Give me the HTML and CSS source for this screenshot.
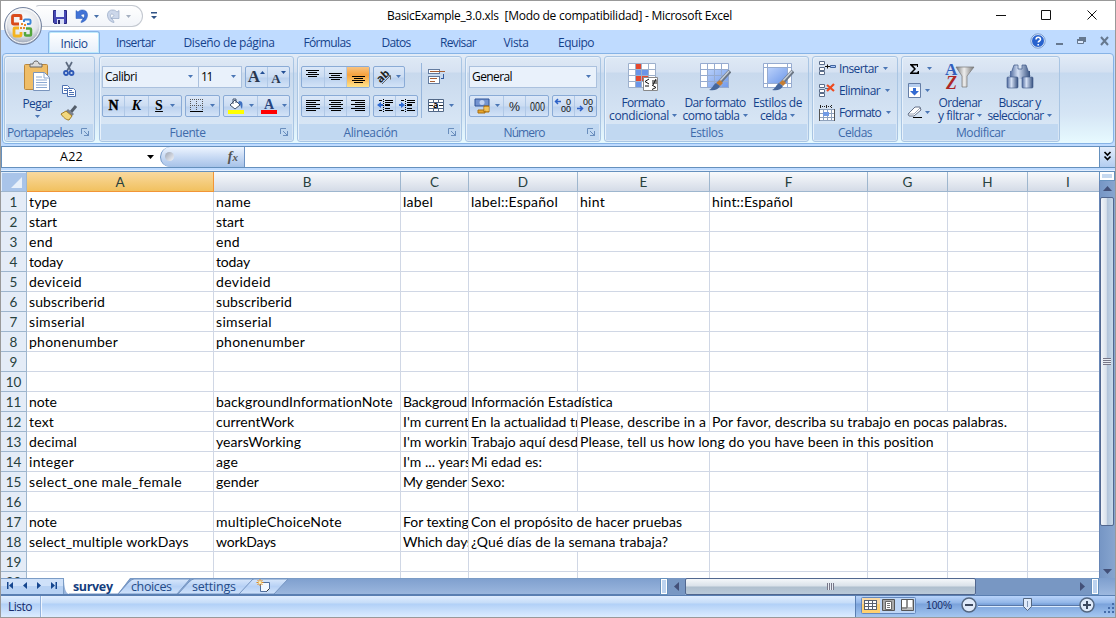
FILE: index.html
```
<!DOCTYPE html>
<html lang="es">
<head>
<meta charset="utf-8">
<title>BasicExample_3.0.xls - Microsoft Excel</title>
<link rel="stylesheet" href="styles.css">
</head>
<body>
<svg width="0" height="0" class="defs">
  <defs>
    <linearGradient id="gBox" x1="0" y1="0" x2="1" y2="1"><stop offset="0" stop-color="#b9d0fa"/><stop offset="1" stop-color="#6f99ea"/></linearGradient>
    <linearGradient id="gMetal" x1="0" y1="0" x2="1" y2="0"><stop offset="0" stop-color="#4d689c"/><stop offset=".4" stop-color="#d5e1f5"/><stop offset="1" stop-color="#35507f"/></linearGradient>
    <linearGradient id="gFunnel" x1="0" y1="0" x2="1" y2="0"><stop offset="0" stop-color="#777"/><stop offset=".45" stop-color="#eee"/><stop offset="1" stop-color="#777"/></linearGradient>
    <radialGradient id="gOrb" cx=".5" cy=".35" r=".65"><stop offset="0" stop-color="#fff"/><stop offset=".65" stop-color="#e2e4e9"/><stop offset="1" stop-color="#8d99ad"/></radialGradient>
    <linearGradient id="gTab" x1="0" y1="0" x2="0" y2="1"><stop offset="0" stop-color="#d8e7fb"/><stop offset=".5" stop-color="#b7d1f5"/><stop offset="1" stop-color="#cfe2fb"/></linearGradient>
    <symbol id="dd" viewBox="0 0 5 3"><path d="M0 0h5L2.500 3z" fill="#4a76b5"/></symbol>
    <symbol id="launch" viewBox="0 0 8 8"><path d="M.5 6V.5H6" fill="none" stroke="#6a8ebd"/><path d="M8 3v5H3V7h4V3z" fill="#6a8ebd"/><path d="M3 3l4 4" stroke="#6a8ebd"/></symbol>
    <symbol id="brush" viewBox="0 0 22 22"><path d="M21 1L10 13" stroke="#6b7685" stroke-width="4"/><path d="M20 1L10 12" stroke="#c5ced9" stroke-width="1.500"/><path d="M11 10l3 3-3 3-4-3z" fill="#c57d33"/><path d="M7 13l4 3c-2 4-6 5-11 4 3-1 4-5 7-7z" fill="#46679c"/></symbol>
  </defs>
</svg>
<div class="window">
  <header class="titlebar">
    <div class="qat">
      <svg width="100" height="21" viewBox="43 6 100 21">
        <path d="M53.500 10.500h13v13h-12l-1-1z" fill="#4548b4" stroke="#292982"/><path d="M56 10h8v7h-8z" fill="#e9f1ff"/><path d="M57 19h7v5h-7z" fill="#d8def5"/><path d="M58 20h2v4h-2z" fill="#252569"/>
        <path d="M76 10.500v8h8l-3-3c2.500-3 4.500-1 3 2-1 2-3 3-3 5 8-1 9-13 1-12.500-2 0-3 1-4 2z" fill="#4273d6" stroke="#2758b4" stroke-width=".5"/>
        <path d="M119 10.500v8h-8l3-3c-2.500-3-4.500-1-3 2 1 2 3 3 3 5-8-1-9-13-1-12.500 2 0 3 1 4 2z" fill="#ccd7ea" stroke="#98a9c6" stroke-width=".7"/>
        <path d="M94 15h5l-2.500 3z" fill="#4770aa"/><path d="M126 15h5l-2.500 3z" fill="#a4afc0"/>
      </svg>
    </div>
    <svg class="qat-more" width="6" height="8"><path d="M0 0h6v1.500H0zM0 4h6L3 7z" fill="#315386"/></svg>
    <div class="title"><span data-w="345">BasicExample_3.0.xls&nbsp; [Modo de compatibilidad] - Microsoft Excel</span></div>
    <svg class="winbtns" width="104" height="12" viewBox="995 9 104 12" fill="none" stroke="#111" stroke-width="1"><path d="M996 15.500h10M1041.500 10.500h9v9h-9zM1087.500 10.500l9 9M1096.500 10.500l-9 9"/></svg>
  </header>
  <nav class="tabs">
    <div class="tab active"><span data-w="27">Inicio</span></div>
    <div class="tab"><span data-w="39">Insertar</span></div>
    <div class="tab"><span data-w="91">Diseño de página</span></div>
    <div class="tab"><span data-w="47">Fórmulas</span></div>
    <div class="tab"><span data-w="29">Datos</span></div>
    <div class="tab"><span data-w="36">Revisar</span></div>
    <div class="tab"><span data-w="25">Vista</span></div>
    <div class="tab"><span data-w="36">Equipo</span></div>
    <svg class="docbtns" width="80" height="16" viewBox="1030 33 80 16">
      <circle cx="1038" cy="41" r="6.500" fill="#2762ce" stroke="#e7f1ff"/><circle cx="1038" cy="41" r="7.200" fill="none" stroke="#5e83b9" stroke-width=".7"/><path d="M1036 39.500c0-3 4.500-3 4.500 0 0 1.500-2.300 1.500-2.300 3M1038.200 44v1.500" stroke="#fff" stroke-width="1.500" fill="none"/>
      <path d="M1056 43h7v2h-7zM1079 37h7v5h-2v-3h-5z" fill="#66788f"/><path d="M1077.500 39.500h6v4h-6z" fill="#dceaff" stroke="#66788f"/><path d="M1077 39h7v2h-7z" fill="#66788f"/><path d="M1101 37l7 8M1108 37l-7 8" stroke="#66788f" stroke-width="2"/>
    </svg>
  </nav>
  <section class="ribbon">
    <div class="group g-clip">
      <div class="body">
        <div class="big paste">
          <svg width="27" height="31" viewBox="0 0 27 31"><rect x=".5" y="3.500" width="23" height="25" rx="1" fill="#efbd67" stroke="#bb873b"/><path d="M6 6V3h3c0-4 6-4 6 0h3v3z" fill="#dadada" stroke="#666"/><path d="M9.500 11.500h11l5 5v13h-16z" fill="#fff" stroke="#7994bc"/><path d="M20 12v5h5M12 16h6M12 19h11M12 21.500h11M12 24h11M12 26.500h11" stroke="#8ba8d2" fill="none"/></svg>
          <span data-w="29">Pegar</span><svg class="dd"><use href="#dd"/></svg>
        </div>
        <div class="stack">
          <svg width="16" height="16" viewBox="0 0 16 16" fill="none"><path d="M5 1l5 9M11 1L6 10" stroke="#5d6b80" stroke-width="1.700"/><circle cx="5" cy="12" r="2" stroke="#2e59b6" stroke-width="1.800"/><circle cx="10.500" cy="12" r="2" stroke="#2e59b6" stroke-width="1.800"/></svg>
          <svg width="16" height="16" viewBox="0 0 16 16" fill="#fff" stroke="#4d71b1"><path d="M1.500 2.500h5l2 2v6h-7z"/><path d="M3 5.500h3M3 7.500h3"/><path d="M6.500 5.500h6l2 2v6h-8z"/><path d="M8 9.500h5M8 11.500h5M8 7.500h3"/></svg>
          <svg width="16" height="16" viewBox="0 0 16 16"><path d="M15 1l-5 6" stroke="#545e6b" stroke-width="3"/><path d="M7 4l6 5-2 2-6-5z" fill="#7a808d"/><path d="M5 6l6 5-3 4c-3 0-6-3-8-6z" fill="#f2d87e" stroke="#a17b22"/></svg>
        </div>
      </div>
      <footer><span data-w="66">Portapapeles</span><svg class="launch"><use href="#launch"/></svg></footer>
    </div>
    <div class="group g-font">
      <div class="body rows">
        <div class="row">
          <div class="combo w97"><span data-w="32">Calibri</span><svg class="dd"><use href="#dd"/></svg></div><div class="combo w43 joined"><span data-w="11">11</span><svg class="dd"><use href="#dd"/></svg></div>
          <div class="btns w45 gap"><div class="b"><b class="serif">A</b><svg class="sup" width="5" height="3"><path d="M0 3h5L2.500 0z" fill="#234f95"/></svg></div><div class="b"><b class="serif small">A</b><svg class="sup" width="5" height="3"><path d="M0 0h5L2.500 3z" fill="#234f95"/></svg></div></div>
        </div>
        <div class="row">
          <div class="btns w80"><div class="b w22"><b class="serif nks heavy">N</b></div><div class="b w24"><b class="serif nks"><i>K</i></b></div><div class="b"><b class="serif nks"><u>S</u></b><svg class="dd far"><use href="#dd"/></svg></div></div>
          <div class="btns w35 gap"><div class="b"><svg width="13" height="14"><path d="M.5 0v12M6.500 0v12M12.500 0v12M0 .5h13M0 6.500h13" stroke="#555" stroke-dasharray="1 1"/><path d="M0 12.500h13" stroke="#000"/></svg><svg class="dd far"><use href="#dd"/></svg></div></div>
          <div class="btns w67 gap"><div class="b w33"><svg width="17" height="16"><path d="M2 7l5-5 5 5-5 4z" fill="#fff" stroke="#43536c"/><path d="M5 6V1h3v4" fill="none" stroke="#43536c"/><path d="M11 3c4 0 4 3 3 8-2-3-1-5-4-6z" fill="#3e70c0"/><path d="M0 12h16v4H0z" fill="#ff0"/></svg><svg class="dd"><use href="#dd"/></svg></div><div class="b"><svg width="17" height="16"><text x="3" y="11" class="sv-serif" font-size="14" font-weight="bold" fill="#29457e">A</text><path d="M0 12h16v4H0z" fill="#f00"/></svg><svg class="dd"><use href="#dd"/></svg></div></div>
        </div>
      </div>
      <footer><span data-w="36">Fuente</span><svg class="launch"><use href="#launch"/></svg></footer>
    </div>
    <div class="group g-align">
      <div class="body cols">
        <div class="rows">
          <div class="row">
            <div class="btns w69"><div class="b"><svg class="al up" width="15" height="8"><path d="M1 .5h13M3 2.500h9M1 4.500h13M3 6.500h9"/></svg></div><div class="b"><svg class="al" width="15" height="8"><path d="M1 .5h13M3 2.500h9M1 4.500h13M3 6.500h9"/></svg></div><div class="b on"><svg class="al down" width="15" height="8"><path d="M1 .5h13M3 2.500h9M1 4.500h13M3 6.500h9"/></svg></div></div>
            <div class="btns w32 gap"><div class="b"><svg width="15" height="16"><text x="0" y="12" class="sv-ui" font-size="11" font-weight="bold" fill="#222" transform="rotate(-43 5 9)">ab</text><path d="M5 15l8-8M13.500 6.500v4M13.500 6.500h-3.500" stroke="#666" fill="none"/></svg><svg class="dd"><use href="#dd"/></svg></div></div>
          </div>
          <div class="row">
            <div class="btns w69"><div class="b"><svg class="al" width="14" height="12"><path d="M0 .5h14M0 2.500h10M0 4.500h14M0 6.500h10M0 8.500h14M0 10.500h10"/></svg></div><div class="b"><svg class="al" width="14" height="12"><path d="M0 .5h14M2 2.500h10M0 4.500h14M2 6.500h10M0 8.500h14M2 10.500h10"/></svg></div><div class="b"><svg class="al" width="14" height="12"><path d="M0 .5h14M4 2.500h10M0 4.500h14M4 6.500h10M0 8.500h14M4 10.500h10"/></svg></div></div>
            <div class="btns w45 gap"><div class="b"><svg class="al" width="16" height="14"><path d="M2 1.500h3M8 1.500h8M8 3.500h8M8 9.500h5M2 11.500h3M8 11.500h8"/><path d="M8 6h5" stroke-width="2"/><path d="M6.500 0v14" stroke-dasharray="1 1"/><path d="M4 3v2h2v2H4v2L0 6z" fill="#2e69d1" stroke="none"/></svg></div><div class="b"><svg class="al" width="16" height="14"><path d="M2 1.500h3M8 1.500h8M8 3.500h8M8 9.500h5M2 11.500h3M8 11.500h8"/><path d="M8 6h5" stroke-width="2"/><path d="M6.500 0v14" stroke-dasharray="1 1"/><path d="M2 3v2H0v2h2v2l4-3z" fill="#2e69d1" stroke="none"/></svg></div></div>
          </div>
        </div>
        <div class="sep"></div>
        <div class="rows wrap-merge">
          <div class="row"><svg width="17" height="16"><rect x=".5" y=".5" width="11" height="4" fill="#fff" stroke="#637b9f"/><path d="M2 2.500h15" stroke="#a65f36"/><rect x=".5" y="7.500" width="11" height="7" fill="#fff" stroke="#637b9f"/><path d="M2 9.500h7M2 12.500h5" stroke="#a65f36"/><path d="M15.500 5v5M13 9.500h3" stroke="#315aa0"/></svg></div>
          <div class="row"><svg width="16" height="15"><path d="M.5 1.500h15v12H.5zM.5 4.500h15M.5 10.500h15M5.500 1v3M10.500 1v3M5.500 10v3M10.500 10v3" fill="#fff" stroke="#526887"/><text x="5" y="10" class="sv-ui" font-size="9" font-weight="bold">a</text><path d="M1 7.500h4M11 7.500h4" stroke="#222"/></svg><svg class="dd merge-dd"><use href="#dd"/></svg></div>
        </div>
      </div>
      <footer><span data-w="54">Alineación</span><svg class="launch"><use href="#launch"/></svg></footer>
    </div>
    <div class="group g-num">
      <div class="body rows">
        <div class="row"><div class="combo w128"><span data-w="40">General</span><svg class="dd"><use href="#dd"/></svg></div></div>
        <div class="row">
          <div class="btns w80"><div class="b w34"><svg width="17" height="17"><path d="M1 2h14v7H1z" fill="#7494d0" stroke="#2e5396"/><circle cx="8" cy="5.500" r="2.500" fill="#c1d3f4"/><path d="M10 9h5v6h-5zM4 13h7v3H4z" fill="#e8a628" stroke="#a86f12"/><path d="M10 11h5M10 13h5" stroke="#ffe28a"/></svg><svg class="dd"><use href="#dd"/></svg></div><div class="b w23"><svg width="12" height="12"><text x="0" y="10.500" class="sv-lib" font-size="13" fill="#222" textLength="11" lengthAdjust="spacingAndGlyphs">%</text></svg></div><div class="b"><svg width="15" height="12"><text x="0" y="10.500" class="sv-lib" font-size="13" fill="#222" textLength="15" lengthAdjust="spacingAndGlyphs">000</text></svg></div></div>
          <div class="btns w45 gap"><div class="b"><svg width="17" height="15"><path d="M0 3.500h6M3 1L.5 3.500 3 6" stroke="#2d61c7" stroke-width="1.500" fill="none"/><text x="11" y="7" class="sv-num">0</text><text x="6" y="14" class="sv-num">00</text></svg></div><div class="b"><svg width="17" height="15"><path d="M0 10.500h6M3 8l2.500 2.500L3 13" stroke="#2d61c7" stroke-width="1.500" fill="none"/><text x="6" y="7" class="sv-num">00</text><text x="11" y="14" class="sv-num">0</text></svg></div></div>
        </div>
      </div>
      <footer><span data-w="41">Número</span><svg class="launch"><use href="#launch"/></svg></footer>
    </div>
    <div class="group g-style">
      <div class="body">
        <div class="big s1"><svg width="30" height="31"><path d="M.5.500h27v24H.5z" fill="#fff"/><path d="M7 0h7v6H7zM7 13h13v6H7z" fill="#e5482e"/><path d="M7 6h13v7H7zM7 19h7v6H7z" fill="#6b95e8"/><path d="M.5.500h27v24H.5zM0 6.500h28M0 12.500h28M0 18.500h28M7.500 0v25M13.500 0v25M20.500 0v25" fill="none" stroke="#9db0cc"/><path d="M15.500 14.500h14v13h-14z" fill="#fff" stroke="#888"/><path d="M21 16l-4 2.500 4 2.500M17 23h4M24 18h5M24 20h5M28 16l-3 6M24 22l4 2.500-4 2" stroke="#111" fill="none"/></svg><span data-w="43">Formato</span><div class="l2"><span data-w="60">condicional</span><svg class="dd"><use href="#dd"/></svg></div></div>
        <div class="big s2"><svg width="30" height="31"><path d="M.5.500h28v24H.5z" fill="#fff"/><path d="M7 6h22v19H7z" fill="url(#gBox)"/><path d="M.5.500h28v24H.5zM0 6.500h28M0 12.500h28M0 18.500h28M7.500 0v25M14.500 0v25M21.500 0v25" fill="none" stroke="#96abd0"/><use href="#brush" x="9" y="7" width="22" height="22"/></svg><span data-w="61">Dar formato</span><div class="l2"><span data-w="57">como tabla</span><svg class="dd"><use href="#dd"/></svg></div></div>
        <div class="big s3"><svg width="30" height="31"><path d="M.5.500h28v24H.5z" fill="#fff"/><path d="M5 5h19v15H5z" fill="url(#gBox)"/><path d="M.5.500h28v24H.5zM0 4.500h28M0 20.500h28M4.500 0v25M24.500 0v25" fill="none" stroke="#96abd0"/><use href="#brush" x="9" y="7" width="22" height="22"/></svg><span data-w="49">Estilos de</span><div class="l2"><span data-w="27">celda</span><svg class="dd"><use href="#dd"/></svg></div></div>
      </div>
      <footer><span data-w="33">Estilos</span></footer>
    </div>
    <div class="group g-cells">
      <div class="body list">
        <div class="item"><svg width="17" height="15"><path d="M.5.500h5v3h-5zM.5 6.500h5v3h-5zM.5 10.500h5v3h-5z" fill="#fff" stroke="#5a6c89"/><path d="M6 5.500h5M8.500 3.500v4" stroke="#111"/><path d="M11.500 4.500h5v2h-5z" fill="#adcaff" stroke="#41649e"/></svg><span data-w="39">Insertar</span><svg class="dd"><use href="#dd"/></svg></div>
        <div class="item"><svg width="17" height="15"><path d="M.5 1.500h5v3h-5zM.5 6.500h5v3h-5zM.5 10.500h5v3h-5zM6 5.500h5" fill="#fff" stroke="#5a6c89"/><path d="M8 2l7 6M15 1L8 8" stroke="#ed4a20" stroke-width="2.200"/></svg><span data-w="41">Eliminar</span><svg class="dd"><use href="#dd"/></svg></div>
        <div class="item"><svg width="17" height="16"><path d="M1 1.500h12M1.500 0v3M7.500 0v3M12.500 0v3" stroke="#222" stroke-dasharray="1 1"/><path d="M.5 4.500h15v11H.5zM.5 8.500h15M.5 12.500h15M4.500 4v11M8.500 4v11M12.500 4v11" fill="#fff" stroke="#8fa2bc"/><path d="M4 7h6v4H4z" fill="#719be5"/><path d="M.5 4v12M15.500 4v12" stroke="#555"/></svg><span data-w="42">Formato</span><svg class="dd"><use href="#dd"/></svg></div>
      </div>
      <footer><span data-w="34">Celdas</span></footer>
    </div>
    <div class="group g-edit">
      <div class="body">
        <div class="list minor">
          <div class="item"><svg width="12" height="12"><path d="M2 1h8v3H9V2.500H5L8 6 4.500 9.500H9L10 8h1v3H2v-1l4-4-4-4z" fill="#000"/></svg><svg class="dd far"><use href="#dd"/></svg></div>
          <div class="item"><svg width="13" height="15"><path d="M.5.500h12v14H.5z" fill="#fff" stroke="#657ea6"/><path d="M1 1h11v3H1z" fill="#b6ceef"/><path d="M5 5h3v3h3l-4.500 4.500L2 8h3z" fill="#326ad1"/></svg><svg class="dd"><use href="#dd"/></svg></div>
          <div class="item"><svg width="13" height="13"><path d="M0 8l7-7h5l1 3-7 6H1z" fill="#fff" stroke="#647188"/><path d="M1 8h5l6-6" fill="none" stroke="#9ba6b8"/><path d="M5 11.500h9" stroke="#000"/></svg><svg class="dd"><use href="#dd"/></svg></div>
        </div>
        <div class="big e1"><svg width="30" height="31"><text x="0" y="12" class="sv-serif" font-size="17" font-weight="bold" fill="#315ebd">A</text><text x="1" y="26" class="sv-serif" font-size="18" font-weight="bold" font-style="italic" fill="#ad2727">Z</text><path d="M11 4h18l-7 9v11h-5V13z" fill="url(#gFunnel)" stroke="#777" stroke-width=".7"/></svg><span data-w="43">Ordenar</span><div class="l2"><span data-w="36">y filtrar</span><svg class="dd"><use href="#dd"/></svg></div></div>
        <div class="big e2"><svg width="28" height="31"><path d="M8 2h4v4h4V2h4l4 11H4z" fill="url(#gMetal)" stroke="#3e5788" stroke-width=".7"/><path d="M4 8h8v6H4zM16 8h8v6h-8zM12 9h4v7h-4z" fill="url(#gMetal)"/><rect x="1" y="14" width="11" height="11" rx="1" fill="url(#gMetal)" stroke="#3d5788" stroke-width=".6"/><rect x="16" y="14" width="11" height="11" rx="1" fill="url(#gMetal)" stroke="#3d5788" stroke-width=".6"/></svg><span data-w="42">Buscar y</span><div class="l2"><span data-w="56">seleccionar</span><svg class="dd"><use href="#dd"/></svg></div></div>
      </div>
      <footer><span data-w="49">Modificar</span></footer>
    </div>
  </section>
  <section class="formula">
    <div class="namebox"><span data-w="23">A22</span><svg width="7" height="4"><path d="M0 0h7L3.500 4z"/></svg></div>
    <div class="fx"><i class="knob"></i><span class="fxlabel">f<small>x</small></span></div>
    <div class="input"></div>
    <div class="expand"><svg width="7" height="9"><path d="M.5 0L3.500 3l3-3M.5 4.500l3 3 3-3" fill="none" stroke="#000" stroke-width="1.700"/></svg></div>
  </section>
  <main class="work">
    <div class="sheet" id="sheet"></div>
    <div class="vscroll"><div class="splitter"></div><div class="arrow"><svg width="9" height="5"><path d="M0 5h9L4.500 0z" fill="#435078"/></svg></div><div class="vthumb"><i></i></div><div class="arrow end"><svg width="9" height="5"><path d="M0 0h9L4.500 5z" fill="#435078"/></svg></div></div>
  </main>
  <section class="bottom">
    <svg class="sheettabs" width="659" height="17" viewBox="1 579 659 17">
      <path d="M1 579h62v16H1z" fill="#cfe1f9"/><path d="M1 587h62v8H1z" fill="#b7d1f3"/><path d="M1 579.500h659M63.500 579v16" stroke="#7b9cc6"/>
      <path d="M7 583h1.500v7H7zM13 583v7l-4-3.500zM27 583v7l-4-3.500zM37 583v7l4-3.500zM51 583v7l4-3.500zM55.500 583H57v7h-1.500z" fill="#15468f"/>
      <path d="M238 595l11-12q3-3 5-3h34l-14 15z" fill="url(#gTab)" stroke="#7595c2"/>
      <path d="M178 595l11-12q3-3 5-3h59l-14 15z" fill="url(#gTab)" stroke="#7595c2"/>
      <path d="M118 595l11-12q3-3 5-3h56l-13 15z" fill="url(#gTab)" stroke="#7595c2"/>
      <path d="M64 579h66l-12 16H69q-5-1-5-16z" fill="#fff"/><path d="M130 580l-12 15H69" fill="none" stroke="#7595c2"/>
      <path d="M1 595.500h659" stroke="#5a7fb2"/>
      <text x="73" y="592" class="sv-ui" font-size="12.500" font-weight="bold" fill="#153e7e" textLength="40">survey</text>
      <text x="131" y="592" class="sv-ui" font-size="12.500" fill="#244b88" textLength="41">choices</text>
      <text x="192" y="592" class="sv-ui" font-size="12.500" fill="#244b88" textLength="44">settings</text>
      <path d="M260.500 583.500h9v6l-3 3h-6z" fill="#f3f8ff" stroke="#516f9e"/><path d="M269.500 589.500l-3 3" stroke="#333"/><path d="M260 580v7M256.500 583.500h7M257.500 581l5 5M262.500 581l-5 5" stroke="#e18a1c"/><circle cx="260" cy="583.500" r="1.500" fill="#fff2b2"/>
    </svg>
    <div class="hsplit"></div>
    <div class="hbtn"><svg width="5" height="9"><path d="M5 0v9L0 4.500z" fill="#435078"/></svg></div>
    <div class="hthumb"><i></i></div>
    <div class="htrack"><svg width="5" height="9"><path d="M0 0v9l5-4.500z" fill="#435078"/></svg></div>
    <div class="hsplit two"></div>
  </section>
  <footer class="status">
    <div class="ready"><span data-w="24">Listo</span></div>
    <div class="mid"></div>
    <div class="right">
      <svg width="257" height="21" viewBox="857 597 257 21">
        <rect x="861.500" y="598.500" width="54" height="16" rx="1" fill="#bed6f6" stroke="#6488bd"/><rect x="862" y="599" width="18" height="15" fill="#ffd06e"/><path d="M862 599h18v6h-18z" fill="#f9d9a5"/>
        <path d="M864 601h13v10h-13z" fill="#59616d"/><path d="M865 602h3v2h-3zM869 602h3v2h-3zM873 602h3v2h-3zM865 605h3v2h-3zM869 605h3v2h-3zM873 605h3v2h-3zM865 608h3v2h-3zM869 608h3v2h-3zM873 608h3v2h-3z" fill="#fff"/>
        <path d="M882.500 600.500h12v11h-12z" fill="#a9a9a9" stroke="#565656"/><path d="M885.500 602.500h6v8h-6z" fill="#fff" stroke="#666"/><path d="M887 604.500h3M887 606.500h3M887 608.500h3" stroke="#777"/>
        <path d="M901.500 600.500h12v11h-12z" fill="#bbb" stroke="#565656"/><path d="M902 601h4v7h-4zM908 601h4v7h-4z" fill="#fff"/><path d="M907 601v8h-5" fill="none" stroke="#666"/>
        <text x="926" y="610" class="sv-lib" font-size="11.500" fill="#152a69" textLength="26" lengthAdjust="spacingAndGlyphs">100%</text>
        <path d="M978 606.500h102" stroke="#5978a8"/><path d="M978 607.500h102" stroke="#dcecff"/>
        <g fill="#dfeafa" stroke="#536680"><circle cx="969" cy="606" r="7" stroke-width="1.500"/><circle cx="1087" cy="606" r="7" stroke-width="1.500"/></g><path d="M965 606h8M1083 606h8M1087 602v8" stroke="#3d4a60" stroke-width="2"/>
        <path d="M1023.500 599.500h8v8l-4 4-4-4z" fill="#dfeafa" stroke="#536680"/><path d="M1027.500 602v6" stroke="#8498b5"/>
        <path d="M1112 604h2v2h-2zM1108 608h2v2h-2zM1112 608h2v2h-2zM1104 612h2v2h-2zM1108 612h2v2h-2zM1112 612h2v2h-2z" fill="#456ca9"/>
      </svg>
    </div>
  </footer>
  <svg class="orb" width="42" height="42" viewBox="0 0 42 42"><circle cx="20" cy="20" r="18.500" fill="url(#gOrb)" stroke="#7483a0"/><circle cx="20" cy="20" r="17" fill="none" stroke="#fff"/>
    <g fill="none" stroke-width="2.800"><path d="M16 18h-5q-1.500 0-1.500-1v-6q0-1.500 1.500-1.500h6q1 0 1 1V14" stroke="#d94a1b"/><path d="M21 16v-1.500q0-1 1-1h4q1.500 0 1.500 1V17q0 1-1.500 1h-2" stroke="#3c86d8" stroke-width="2"/><path d="M16 22h-4q-1 0-1 1v6q0 1 1 1h5q1 0 1-1v-3" stroke="#f3b31f"/><path d="M23 22.500h4q1 0 1 1v5q0 1-1 1h-4q-1 0-1-1V26" stroke="#53a63c" stroke-width="2.500"/></g><path d="M18 17h2v2h-2zM21 18h2v2h-2zM17 21h2v2h-2zM20 21h2v2h-2z" fill="#e88a2a"/></svg>
</div>
<script src="app.js"></script>
</body>
</html>
```
FILE: styles.css
```
* { box-sizing: border-box; }
body { margin: 0; font-family: "Open Sans", "Noto Sans", sans-serif; font-size: 12px; color: #15428b; overflow: hidden; }
svg { flex: none; display: block; overflow: visible; }
.defs { position: absolute; }
span { white-space: pre; }
.window { position: relative; width: 1116px; height: 618px; border: 1px solid #999; display: flex; flex-direction: column; background: #bfdbff; }
.sv-ui { font-family: "Open Sans", sans-serif; }
.sv-lib { font-family: "Liberation Sans", sans-serif; }
.sv-serif { font-family: "Liberation Serif", serif; }
.sv-num { font: 9px "Liberation Sans", sans-serif; fill: #111; }

.titlebar { height: 29px; background: #fff; display: flex; align-items: center; }
.qat { margin-left: 34px; margin-top: 2px; width: 108px; height: 22px; border: 1px solid #c3c8d0; border-left-color: transparent; border-radius: 4px 11px 11px 0; padding-left: 7px; background: linear-gradient(#fff, #f1f4f9); overflow: hidden; }
.qat-more { margin-left: 8px; margin-top: 2px; }
.title { flex: 1; margin-left: 230px; color: #000; }
.winbtns { margin-right: 16px; }

.tabs { height: 23px; padding: 1px 0 0 47px; display: grid; grid-template-columns: 52px 71px 116px 80px 58px 66px 50px 70px 1fr; }
.tab { display: flex; justify-content: center; align-items: center; padding-top: 2px; }
.tab.active { background: linear-gradient(#fff, #e6effa); border: 1px solid #86b3e6; border-bottom: 0; border-radius: 3px 3px 0 0; box-shadow: inset 0 0 0 1px #bce9fc; }
.docbtns { justify-self: end; margin: 2px 5px 0 0; }

.ribbon { height: 91px; margin: 0 1px 0 1px; border: 1px solid #86b3e6; border-radius: 4px; padding: 2px 0 1px 1px; display: flex; gap: 3px; background: linear-gradient(#e3ecf7, #d3e0f1 18px, #c6d9ef 19px, #d5e5f5 60px, #e7faff); }
.group { height: 86px; flex: none; border: 1px solid #a9c5e3; border-radius: 3px; display: flex; flex-direction: column; background: linear-gradient(#dfe9f5, #d6e2f2 15px, #c8d9ed 16px, #d8e6f5 68px); box-shadow: inset 1px 1px #e8f1fb; }
.group footer { height: 16px; margin: 0 1px 1px; background: #c1d8f1; color: #3e6aaa; display: flex; align-items: center; justify-content: center; position: relative; padding-top: 1px; }
.body { height: 67px; display: flex; flex: none; }
.launch { width: 8px; height: 8px; position: absolute; right: 4px; top: 4px; }
.g-clip { width: 91px; } .g-font { width: 195px; margin-left: 1px; } .g-align { width: 165px; } .g-num { width: 136px; } .g-style { width: 205px; } .g-cells { width: 86px; } .g-edit { width: 159px; }
.group.g-clip footer { justify-content: flex-start; padding-left: 1px; }
.g-font footer, .g-align footer, .g-num footer { padding-right: 18px; }
.dd { width: 5px; height: 3px; }
.far { margin-left: 7px; }
.big { display: flex; flex-direction: column; align-items: center; padding-top: 6px; flex: none; }
.big > span, .l2 { line-height: 13px; height: 13px; }
.big > span { margin-top: 2px; }
.l2 { display: flex; align-items: center; gap: 3px; }
.paste { width: 42px; padding-top: 4px; margin-left: 11px; }
.paste > span { margin-top: 5px; }
.paste .dd { margin-top: 5px; }
.stack { display: flex; flex-direction: column; gap: 6px; padding: 4px 0 0 3px; }
.rows { display: flex; flex-direction: column; gap: 7px; padding-top: 9px; }
.body.rows { padding-left: 2px; }
.g-num .body.rows { padding-left: 3px; }
.cols { padding-left: 3px; }
.row { height: 22px; display: flex; align-items: center; flex: none; }
.gap { margin-left: 3px; }
.w97 { width: 97px; } .w43 { width: 43px; } .w45 { width: 45px; } .w80 { width: 80px; } .w35 { width: 35px; } .w67 { width: 67px; } .w69 { width: 69px; } .w32 { width: 32px; } .w128 { width: 128px; }
.combo { height: 22px; border: 1px solid #abc1de; background: #e9f1fb; color: #000; display: flex; align-items: center; justify-content: space-between; padding: 0 5px 0 2px; }
.joined { border-left: 0; }
.btns { height: 22px; border: 1px solid #8aabd6; border-radius: 2px; display: flex; background: linear-gradient(#dce8f8, #cbdcf2 10px, #bbd1ee 11px, #d3e3f7); }
.b { flex: 1; display: flex; align-items: center; justify-content: center; gap: 4px; border-right: 1px solid #b0c8e6; min-width: 0; }
.b:last-child { border-right: 0; }
.b.w22 { flex: 0 0 22px; } .b.w24 { flex: 0 0 24px; } .b.w33 { flex: 0 0 34px; } .b.w34 { flex: 0 0 34px; } .b.w23 { flex: 0 0 22px; }
.b.on { background: linear-gradient(#f8c381, #f7a23e 8px, #ffe38a); }
.b .far { margin-left: 3px; }
.merge-dd { margin-left: 5px; }
.al { stroke: #000; fill: none; }
.al.up { margin-bottom: 6px; } .al.down { margin-top: 6px; }
.serif { font-family: "Liberation Serif", serif; font-size: 17px; color: #29374f; line-height: 20px; }
.serif.small { font-size: 13px; padding-top: 4px; }
.serif.nks { font-size: 14px; color: #000; }
.serif.heavy { -webkit-text-stroke: .4px #000; }
.sup { align-self: flex-start; margin: 4px 0 0 -4px; }
.sep { width: 1px; height: 55px; background: #97b6dc; margin: 6px 6px 0 3px; }
.s1 { width: 76px; } .s2 { width: 68px; } .s3 { width: 57px; }
.list { display: flex; flex-direction: column; padding: 2px 0 0 6px; gap: 2px; }
.item { display: flex; align-items: center; height: 20px; gap: 3px; }
.g-cells .item span + .dd { margin-left: 2px; }
.list.minor { width: 35px; flex: none; }
.minor .item { gap: 4px; }
.item .far { margin-left: 3px; }
.e1 { width: 46px; } .e2 { width: 73px; }

.formula { height: 22px; margin-top: 2px; display: flex; border: 1px solid #6590bd; border-right: 0; background: #fff; }
.namebox { width: 158px; display: flex; align-items: center; color: #000; padding-left: 58px; font-size: 12.5px; }
.namebox svg { margin-left: auto; margin-right: 6px; }
.fx { width: 85px; border: 1px solid #6d93c4; border-width: 0 1px 0 1px; border-radius: 10px 0 0 10px; background: linear-gradient(#eef5ff, #c8daf4 50%, #a6c2e8); display: flex; align-items: center; justify-content: space-between; padding: 0 6px 0 4px; }
.knob { width: 9px; height: 9px; border-radius: 50%; background: linear-gradient(135deg, #9ca4b3, #f4f6fa); }
.fxlabel { font: italic bold 14px/18px "Liberation Serif", serif; color: #555; }
.fxlabel small { font-size: 11px; }
.input { flex: 1; }
.expand { width: 16px; border-left: 1px solid #6590bd; background: linear-gradient(#e1ecfb, #b3cdf0); display: flex; align-items: center; justify-content: center; }

.work { height: 410px; margin-top: 3px; display: flex; border-top: 1px solid #6590bd; box-shadow: 0 -1px #e3efff; }
.sheet { width: 1098px; height: 407px; overflow: hidden; background: #fff; flex: none; font-family: Lato, "Open Sans", sans-serif; font-size: 14px; color: #000; }
.r { display: grid; grid-template-columns: 26px 187px 187px 68px 109px 132px 158px 80px 80px 81px; height: 20px; width: 1108px; }
.c { border-right: 1px solid #d0d7e5; border-bottom: 1px solid #d0d7e5; padding-left: 2px; line-height: 20px; overflow: hidden; min-width: 0; }
.c.n { background: #e4ecf7; border-color: #9eb6ce; padding: 0; text-align: center; color: #27413e; font-size: 13.5px; }
.r.head .c { background: linear-gradient(#f8fafc, #d4dbe7); border-color: #9eb6ce; text-align: center; padding: 0; color: #27413e; font-size: 13.5px; line-height: 21px; }
.r.head .sel { background: linear-gradient(#f9d99f, #f1c15f); border-color: #f29536; }
.r.head .corner { background: #a9c4e9; box-shadow: inset 1px 1px #e1edfb; display: flex; justify-content: flex-end; align-items: flex-end; padding: 0 4px 3px 0; }
.span2 { grid-column: span 2; } .span3 { grid-column: span 3; }
.vscroll { width: 16px; display: flex; flex-direction: column; background: linear-gradient(90deg, #7696c5, #87a5cf); padding: 0 1px 0 0; border-left: 1px solid #6685b5; }
.splitter { height: 8px; border: 2px solid #fff; outline: 1px solid #6590bd; background: #c6d9f0; }
.arrow { height: 17px; display: flex; align-items: center; justify-content: center; }
.vthumb { height: 329px; border: 1px solid #51678f; border-radius: 2px; background: linear-gradient(90deg, #f1f5fa, #d9e1eb 45%, #b1c3d9 50%, #c7d9ea); display: flex; align-items: center; justify-content: center; }
.vthumb i { width: 8px; height: 7px; background: repeating-linear-gradient(#778 0 1px, #e8edf4 1px 2px); }
.arrow.end { margin-top: auto; }

.bottom { height: 17px; display: flex; margin-top: -2px; background: linear-gradient(#7e9fce, #9db8df); position: relative; }
.sheettabs { width: 659px; }
.hsplit { width: 8px; border: 2px solid #fff; outline: 1px solid #6590bd; outline-offset: -1px; background: #bcd3ef; }
.hbtn { width: 17px; background: #7897c3; display: flex; align-items: center; justify-content: center; }
.hthumb { width: 291px; border: 1px solid #51678f; border-radius: 2px; background: linear-gradient(#f4f7fa, #d9e1e9 48%, #afbfce 52%, #bbcad9); display: flex; align-items: center; justify-content: center; }
.hthumb i { width: 7px; height: 7px; background: repeating-linear-gradient(90deg, #778 0 1px, #e8edf4 1px 2px); }
.htrack { flex: 1; background: #7897c3; display: flex; align-items: center; justify-content: flex-end; padding-right: 6px; }
.hsplit.two { margin-right: 16px; }
.status { flex: 1; display: flex; border-top: 1px solid #5a7fb2; background: linear-gradient(#e0edff, #c5dcf8 7px, #b1d0f7 8px, #dcecff); color: #15296b; }
.ready { width: 40px; border-right: 1px solid #93b2dc; box-shadow: 1px 0 #eff6ff; display: flex; align-items: center; padding-left: 7px; }
.mid { flex: 1; }
.right { width: 260px; border-left: 1px solid #5a7fb2; padding-left: 1px; background: linear-gradient(#b9d4fb, #91b5e7 7px, #7aa2db 8px, #a5c7f0); }
.orb { position: absolute; left: 2px; top: 5px; }
```
FILE: app.js
```
// Each entry: column letter -> [text, width in px, columns covered]
const rows = {
  1: {A:['type',28],B:['name',35],C:['label',30],D:['label::Español',87],E:['hint',25],F:['hint::Español',81]},
  2: {A:['start',28],B:['start',28]},
  3: {A:['end',24],B:['end',24]},
  4: {A:['today',34],B:['today',34]},
  5: {A:['deviceid',53],B:['devideid',55]},
  6: {A:['subscriberid',76],B:['subscriberid',76]},
  7: {A:['simserial',56],B:['simserial',56]},
  8: {A:['phonenumber',89],B:['phonenumber',89]},
  11: {A:['note',28],B:['backgroundInformationNote',177],C:['Backgroud',64],D:['Información Estadística',142,2]},
  12: {A:['text',25],B:['currentWork',78],C:["I'm current",66],D:['En la actualidad tr',109],E:['Please, describe in a',126],F:['Por favor, describa su trabajo en pocas palabras.',295,3]},
  13: {A:['decimal',48],B:['yearsWorking',85],C:["I'm workin",64],D:['Trabajo aquí desd',107],E:['Please, tell us how long do you have been in this position',354,3]},
  14: {A:['integer',45],B:['age',22],C:["I'm ... years",68],D:['Mi edad es:',71]},
  15: {A:['select_one male_female',153],B:['gender',43],C:['My gender',64],D:['Sexo:',34]},
  17: {A:['note',28],B:['multipleChoiceNote',126],C:['For texting',66],D:['Con el propósito de hacer pruebas',211,2]},
  18: {A:['select_multiple workDays',160],B:['workDays',60],C:['Which days',70],D:['¿Qué días de la semana trabaja?',197,2]}
};
const letters = 'ABCDEFGHI';
let html = '<div class="r head"><div class="c corner"><svg width="11" height="11"><path d="M11 0v11H0z" fill="#e8f0fa"/></svg></div>';
for (const l of letters) html += `<div class="c${l === 'A' ? ' sel' : ''}">${l}</div>`;
html += '</div>';
for (let n = 1; n <= 20; n++) {
  html += `<div class="r"><div class="c n">${n}</div>`;
  for (let i = 0; i < letters.length;) {
    const cell = (rows[n] || {})[letters[i]];
    const span = cell && cell[2] || 1;
    html += `<div class="c span${span}">${cell ? `<span data-w="${cell[1]}">${cell[0]}</span>` : ''}</div>`;
    i += span;
  }
  html += '</div>';
}
document.getElementById('sheet').innerHTML = html;

for (const el of document.querySelectorAll('[data-w]')) {
  const range = document.createRange();
  range.selectNodeContents(el);
  const natural = range.getBoundingClientRect().width;
  el.style.letterSpacing = (el.dataset.w - natural) / el.textContent.length + 'px';
}
```
